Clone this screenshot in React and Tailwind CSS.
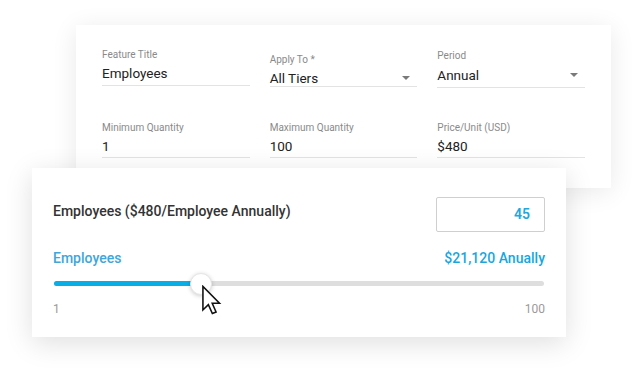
import React from 'react';

const Caret = () => (
  <svg width="8" height="4" viewBox="0 0 8 4" className="absolute right-[7px]">
    <path d="M0 0 L8 0 L4 4 Z" fill="#7a7a7a" />
  </svg>
);

const Field = ({ label, value, top, gap, bottom, caret }) => (
  <div className="flex flex-col" style={{ paddingTop: top }}>
    <span className="text-[10px] leading-[12px] text-[#8a8a8a]">{label}</span>
    <div
      className="relative flex items-center border-b border-[#e3e3e3]"
      style={{ marginTop: gap, paddingBottom: bottom }}
    >
      <span className="text-[13.5px] leading-[16px] text-[#222]">{value}</span>
      {caret && <Caret />}
    </div>
  </div>
);

const Cursor = () => (
  <svg width="21" height="30" viewBox="0 0 14 21" className="absolute left-[4px] top-[1px]">
    <path
      d="M1 1 L1 17.5 L4.8 13.8 L7.6 20 L10.2 18.9 L7.5 12.8 L12.6 12.8 Z"
      fill="#fff"
      stroke="#111"
      strokeWidth="1.1"
      strokeLinejoin="miter"
    />
  </svg>
);

export default function App() {
  // thumb sits about 30% along the track in the design
  const pct = 30;

  return (
    <div className="w-[640px] h-[374px] bg-white overflow-hidden font-['Roboto',sans-serif]">
      {/* Back card: feature settings */}
      <div className="ml-[76px] mt-[25px] w-[535px] h-[163px] bg-white shadow-[0_4px_24px_rgba(0,0,0,0.09)] px-[26px]">
        <div className="grid grid-cols-3 gap-x-[20px] items-start">
          <Field label="Feature Title" value="Employees" top={24} gap={4} bottom={4} />
          <Field label="Apply To *" value="All Tiers" top={29} gap={4} bottom={0} caret />
          <Field label="Period" value="Annual" top={25} gap={5} bottom={4} caret />
        </div>
        <div className="grid grid-cols-3 gap-x-[20px] items-start mt-[34px]">
          <Field label="Minimum Quantity" value="1" top={0} gap={4} bottom={3} />
          <Field label="Maximum Quantity" value="100" top={0} gap={4} bottom={3} />
          <Field label="Price/Unit (USD)" value="$480" top={-1} gap={4} bottom={3} />
        </div>
      </div>

      {/* Front card: slider */}
      <div className="relative z-10 -mt-[20px] ml-[32px] w-[534px] h-[169px] bg-white shadow-[0_6px_26px_rgba(0,0,0,0.13)] px-[21px] pt-[29px]">
        <div className="flex items-start justify-between">
          <span className="mt-[5px] text-[14px] leading-[18px] font-medium text-[#333]">
            Employees ($480/Employee Annually)
          </span>
          <div className="w-[109px] h-[35px] border border-[#cfcfcf] rounded-[2px] flex items-center justify-end pr-[14px]">
            <span className="text-[14px] font-semibold text-[#1ea8e0]">45</span>
          </div>
        </div>

        <div className="mt-[16px] flex items-center justify-between leading-[20px]">
          <span className="text-[14px] font-medium text-[#40a6dc]">Employees</span>
          <span className="text-[14px] font-medium text-[#17a6e0]">$21,120 Anually</span>
        </div>

        <div className="relative mt-[13px] mx-px h-[5px] rounded-full bg-[#dedede]">
          <div className="h-full rounded-full bg-[#0aaee6]" style={{ width: `${pct}%` }} />
          <div
            className="absolute top-1/2 -translate-x-1/2 -translate-y-1/2"
            style={{ left: `${pct}%` }}
          >
            <div className="relative w-[22px] h-[22px] rounded-full bg-white border border-[#e6e6e6] shadow-[0_1px_4px_rgba(0,0,0,0.2)]">
              <div className="absolute left-[6px] top-[10px]">
                <Cursor />
              </div>
            </div>
          </div>
        </div>

        <div className="mt-[15px] flex justify-between text-[12px] leading-[16px] text-[#9a9a9a]">
          <span>1</span>
          <span>100</span>
        </div>
      </div>
    </div>
  );
}
